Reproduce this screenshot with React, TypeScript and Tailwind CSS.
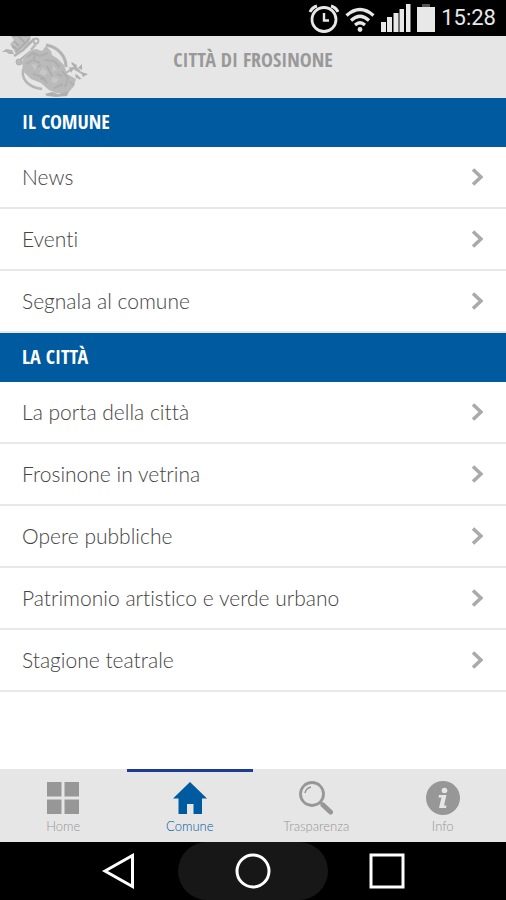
import type { ReactNode } from "react"

const sections = [
  { title: "IL COMUNE", items: ["News", "Eventi", "Segnala al comune"] },
  {
    title: "LA CITTÀ",
    items: [
      "La porta della città",
      "Frosinone in vetrina",
      "Opere pubbliche",
      "Patrimonio artistico e verde urbano",
      "Stagione teatrale",
    ],
  },
]

const condensed = "font-['Open_Sans_Condensed','Liberation_Sans_Narrow','Open_Sans',sans-serif] font-bold"

function StatusBar() {
  return (
    <div className="flex h-9 items-center justify-end gap-1.5 bg-black pr-2.5 text-[#e8e8e8]">
      {/* Alarm */}
      <svg className="h-8 w-8" viewBox="0 0 32 32" fill="none" stroke="currentColor">
        <circle cx="17" cy="17.500" r="12" strokeWidth="2.800" />
        <path d="M17 11V18.500H22" strokeWidth="2.400" />
        <path d="M3 10Q5 5.500 10 4M31 10Q29 5.500 24 4" strokeWidth="3" />
      </svg>
      {/* Wifi */}
      <svg className="h-8 w-[30px]" viewBox="0 0 30 32" fill="none" stroke="currentColor" strokeWidth="3.2">
        <path d="M1.500 13.500Q15 1.500 28.500 13.500M6 18.500Q15 10 24 18.500M10 23Q15 18.500 20 23" />
        <circle cx="15" cy="27.500" r="2.400" fill="currentColor" stroke="none" />
      </svg>
      {/* Signal */}
      <svg className="h-8 w-[30px]" viewBox="0 0 30 32" fill="currentColor">
        <rect x="0" y="20" width="5" height="10" />
        <rect x="6" y="15" width="5" height="15" />
        <rect x="12.500" y="11" width="5" height="19" />
        <rect x="18.500" y="7" width="4.500" height="23" />
        <rect x="25" y="2" width="4.500" height="28" />
      </svg>
      {/* Battery */}
      <svg className="h-8 w-[18px]" viewBox="0 0 18 32">
        <rect x="5" y="2" width="8" height="3" fill="#555" />
        <rect x="0" y="5" width="18" height="25" fill="currentColor" />
      </svg>
      <span className="font-[Roboto,sans-serif] text-[22px] leading-8">15:28</span>
    </div>
  )
}

function Crest() {
  return (
    <svg className="absolute top-0 left-0 h-[62px] w-[90px]" viewBox="0 0 90 62" fill="none" aria-hidden="true">
      {/* Crown */}
      <path d="M11 0L14 4L10 8L13 13L16 18L29 7L31 0Z" fill="#bebebe" />
      <path d="M14 20L23 14L34 3" stroke="#b2b2b2" strokeWidth="2.500" />
      <path d="M16 16L30 2M14 5L19 10M19 1L25 7M12 10L17 13M12 0H30" stroke="#a9a9a9" strokeWidth="1.500" />
      <path d="M2 16L6 13L12 14L14 18L9 18L6 16Z" fill="#b4b4b4" />
      <circle cx="36" cy="5" r="2.500" stroke="#b4b4b4" strokeWidth="1.800" />
      <path d="M36 8L31 14" stroke="#b8b8b8" strokeWidth="2.500" />
      {/* Scrolls round the shield */}
      <path d="M46 9C58 11 66 20 66 31" stroke="#b4b4b4" strokeWidth="3" />
      <path d="M24 31C20 42 27 51 42 53" stroke="#b6b6b6" strokeWidth="2.500" />
      <path d="M52 16L59 20L63 27L57 23Z" fill="#e6e6e6" />
      <circle cx="19" cy="26" r="3" fill="#bbb" stroke="#b0b0b0" />
      <path d="M20 24L27 18" stroke="#b0b0b0" strokeWidth="2" />
      {/* Shield */}
      <path d="M24 20L29 15L36 13L42 15L46 10L51 15L52 19L58 23L64 29L67 38L76 43L74 50L68 57L56 57L49 54L41 47L31 43L24 36L22 27Z" fill="#bababa" />
      <path d="M27 21L33 17L40 20L48 17M26 28L33 24L40 27M45 24L54 25L60 31M62 35L68 42L65 51M54 52L63 48M33 38L42 41L47 47M35 17L34 23M70 46L74 49" stroke="#afafaf" strokeWidth="2" />
      <path d="M31 28L38 29L35 34ZM43 32L48 36L44 40L39 37ZM53 29L57 34L52 36ZM53 41L59 43L56 47L51 46Z" fill="#c7c7c7" />
      <path d="M37 31L41 29M47 30L52 40M57 38L62 40M40 43L45 42" stroke="#a8a8a8" strokeWidth="1.200" />
      {/* Laurel sprigs */}
      <path d="M66 37L73 32L85 39M72 27L80 36M76 39L80 43" stroke="#b4b4b4" strokeWidth="2" />
      <path d="M71 26L77 29L75 33ZM78 32L82 28L82 34ZM81 36L88 38L83 41ZM75 38L82 43L76 42ZM69 31L74 32L71 37Z" fill="#b0b0b0" />
      <path d="M45 58L52 56L58 58L69 55L67 60L56 61L47 60Z" fill="#b0b0b0" />
    </svg>
  )
}

function Chevron() {
  return (
    <svg className="h-[18px] w-3 shrink-0" viewBox="0 0 12 18" fill="none" stroke="#aaa" strokeWidth="3.600">
      <path d="M2 1.500L10 9L2 16.500" />
    </svg>
  )
}

function Tab({ label, active, children }: { label: string; active?: boolean; children: ReactNode }) {
  return (
    <button
      className={`flex flex-1 flex-col items-center border-t-3 pt-2 ${
        active ? "border-[#1c3c98] text-[#005aa0]" : "border-transparent text-[#979797]"
      }`}
    >
      <svg className="h-9 w-9" viewBox="0 0 36 36" fill="none">
        {children}
      </svg>
      <span className="font-[Lato,sans-serif] text-[13px] leading-5 font-light">{label}</span>
    </button>
  )
}

export default function App() {
  return (
    <div className="flex min-h-screen flex-col bg-white">
      <StatusBar />

      <header className="relative h-[62px] bg-[#e6e6e6] pt-3 text-center">
        <Crest />
        <h1 className={`${condensed} text-[20px] leading-6 text-[#999]`}>CITTÀ DI FROSINONE</h1>
      </header>

      <main className="flex-1">
        {sections.map((section) => (
          <section key={section.title}>
            <h2 className={`${condensed} h-[49px] bg-[#005aa0] px-[22px] text-[20px] leading-[48px] text-white`}>
              {section.title}
            </h2>
            <ul>
              {section.items.map((item) => (
                <li key={item}>
                  <a
                    href="#"
                    className="flex h-[62px] items-center justify-between border-b-2 border-[#e8e8e8] pr-[23px] pl-[22px] font-[Lato,sans-serif] text-[21px] font-light text-[#444] [font-variant-ligatures:none]"
                  >
                    {item}
                    <Chevron />
                  </a>
                </li>
              ))}
            </ul>
          </section>
        ))}
      </main>

      <nav className="flex h-[73px] bg-[#e6e6e6]">
        <Tab label="Home">
          <path d="M2 2H16.500V16.500H2ZM19.500 2H34V16.500H19.500ZM2 19.500H16.500V34H2ZM19.500 19.500H34V34H19.500Z" fill="currentColor" />
        </Tab>
        <Tab label="Comune" active>
          <path d="M18 2L35 18.500H30V34H21.500V24H15V34H6.500V18.500H1Z" fill="currentColor" />
        </Tab>
        <Tab label="Trasparenza">
          <circle cx="14" cy="14" r="11.500" stroke="currentColor" strokeWidth="2.800" />
          <path d="M7 13Q8 8 13 7" stroke="currentColor" strokeWidth="1.600" />
          <path d="M22 22L25 25" stroke="currentColor" strokeWidth="2" />
          <path d="M25 25L32.500 32" stroke="currentColor" strokeWidth="5" strokeLinecap="round" />
        </Tab>
        <Tab label="Info">
          <circle cx="18" cy="18" r="17" fill="currentColor" />
          <circle cx="19.500" cy="10.500" r="2.800" fill="#e6e6e6" />
          <path d="M14 15H21.500L19 25.500H21.500L21 28H14L16.500 17.500H13.500Z" fill="#e6e6e6" />
        </Tab>
      </nav>

      <div className="flex h-[58px] items-center justify-center bg-black">
        <button aria-label="Back" className="flex w-[134px] justify-center">
          <svg className="h-9 w-9" viewBox="0 0 36 36" fill="none" stroke="white" strokeWidth="3">
            <path d="M4 18L31.500 2.500V33.500Z" />
          </svg>
        </button>
        <button aria-label="Home" className="-mx-2 flex h-[58px] w-[150px] items-center justify-center rounded-full bg-[#171717]">
          <svg className="h-9 w-9" viewBox="0 0 36 36" fill="none" stroke="white" strokeWidth="3">
            <circle cx="18" cy="18" r="16" />
          </svg>
        </button>
        <button aria-label="Recent apps" className="flex w-[134px] justify-center">
          <svg className="h-9 w-9" viewBox="0 0 36 36" fill="none" stroke="white" strokeWidth="3">
            <rect x="2" y="2" width="32" height="32" />
          </svg>
        </button>
      </div>
    </div>
  )
}
